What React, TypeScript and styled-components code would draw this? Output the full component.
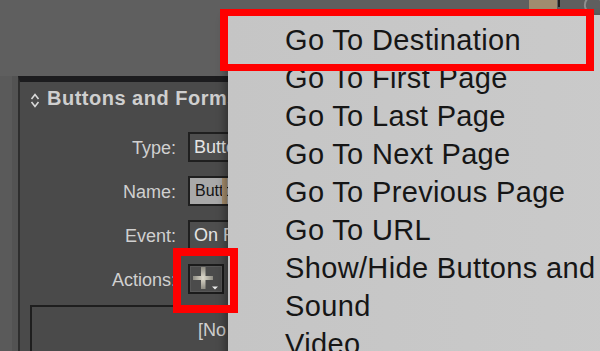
import React from "react";
import styled, { createGlobalStyle } from "styled-components";

const GlobalStyle = createGlobalStyle`
  html, body { margin: 0; padding: 0; background: #5f5f5f; }
  body {
    width: 600px;
    height: 351px;
    overflow: hidden;
    font-family: "Liberation Sans", Arial, sans-serif;
  }
`;

const Stage = styled.div`
  position: relative;
  width: 600px;
  height: 351px;
  overflow: hidden;
  display: flex;
  flex-direction: column;
  background: #5f5f5f;
`;

const TopBar = styled.div`
  height: 76px;
  flex: none;
  display: flex;
  align-items: flex-start;
  padding-left: 529px;
  box-sizing: border-box;
`;

const Swatch = styled.div`
  width: 29px;
  height: 9px;
  background: #a08c6f;
`;

const SwatchEdge = styled.div`
  width: 2px;
  height: 7px;
  margin-left: 1px;
  background: #1e1e1e;
`;

const RingIcon = styled.svg`
  margin-left: 21px;
  display: block;
`;

const Workspace = styled.div`
  flex: 1;
  display: flex;
  background: linear-gradient(90deg, #5a5a5a 0, #5a5a5a 12px, #535353 12px, #535353 18px);
`;

const Panel = styled.section`
  width: 506px;
  margin-left: 18px;
  flex: none;
  display: flex;
  flex-direction: column;
  background: #4a4a4a;
  border-top: 6px solid #1c1c1e;
  border-left: 2px solid #2e2e2e;
`;

const PanelHeader = styled.header`
  display: flex;
  align-items: center;
  gap: 7px;
  height: 24px;
  padding: 4px 0 0 10px;
`;

const CollapseIcon = styled.svg`
  display: block;
  margin-top: 5px;
`;

const PanelTitle = styled.h2`
  margin: 0;
  font-size: 20px;
  line-height: 24px;
  font-weight: 700;
  letter-spacing: 0.5px;
  color: #cfcfcf;
  white-space: nowrap;
`;

const Form = styled.div`
  display: grid;
  grid-template-columns: 156px auto;
  column-gap: 12px;
  row-gap: 14px;
  margin-top: 22px;
  align-items: center;
  justify-items: start;
`;

const Label = styled.label`
  justify-self: end;
  font-size: 18px;
  color: #d0d0d0;
  white-space: nowrap;
  transform: translateY(1px);
`;

const Field = styled.div<{ $light?: boolean }>`
  position: relative;
  width: 300px;
  height: 30px;
  box-sizing: border-box;
  border: 2px solid #1f1f1f;
  background: ${(p) => (p.$light ? "#a9a9a9" : "#4e4e4e")};
  color: ${(p) => (p.$light ? "#141414" : "#e4e4e4")};
  font-size: ${(p) => (p.$light ? "16px" : "18px")};
  line-height: 26px;
  padding-left: ${(p) => (p.$light ? "5px" : "4px")};
  white-space: nowrap;
  overflow: hidden;
`;

const FieldMarker = styled.span`
  position: absolute;
  left: 32px;
  top: 0;
  bottom: 0;
  width: 5px;
  background: #a88f6e;
`;

const ActionButton = styled.button`
  width: 36px;
  height: 30px;
  box-sizing: border-box;
  padding: 0;
  border: 2px solid #1b1b1b;
  background: #4b4b4b;
  box-shadow: inset 0 0 0 1px #575757;
  display: block;
`;

const ActionList = styled.div`
  flex: 1;
  margin: 11px 10px 0 10px;
  border: 2px solid #1e1e1e;
  border-bottom: none;
  padding-top: 13px;
  text-align: center;
  font-size: 18px;
  line-height: 21px;
  color: #cfcfcf;
`;

const Menu = styled.ul`
  position: absolute;
  left: 228px;
  top: 15px;
  width: 400px;
  height: 360px;
  margin: 0;
  padding: 6px 0 0 57px;
  box-sizing: border-box;
  list-style: none;
  background: linear-gradient(90deg, #c5c5c5, #cacaca);
  box-shadow: -3px 3px 8px rgba(0, 0, 0, 0.35);
`;

const MenuItem = styled.li`
  font-size: 29px;
  line-height: 38px;
  letter-spacing: 0.35px;
  color: #161616;
  white-space: nowrap;
`;

const Highlight = styled.div`
  position: absolute;
  box-sizing: border-box;
  border-style: solid;
  border-color: #ff0000;
  pointer-events: none;
`;

const DestinationHighlight = styled(Highlight)`
  left: 220px;
  top: 9px;
  width: 374px;
  height: 62px;
  border-width: 7px 8px;
`;

const ActionsHighlight = styled(Highlight)`
  left: 173px;
  top: 248px;
  width: 65px;
  height: 65px;
  border-width: 8px;
`;

const menuItems = [
  "Go To Destination",
  "Go To First Page",
  "Go To Last Page",
  "Go To Next Page",
  "Go To Previous Page",
  "Go To URL",
  "Show/Hide Buttons and Forms",
  "Sound",
  "Video",
];

export default function App() {
  return (
    <Stage>
      <GlobalStyle />
      <TopBar>
        <Swatch />
        <SwatchEdge />
        <RingIcon width="20" height="9" viewBox="0 0 20 9">
          <circle cx="13" cy="5" r="9" fill="none" stroke="#8f8f8f" strokeWidth="2" />
        </RingIcon>
      </TopBar>
      <Workspace>
        <Panel>
          <PanelHeader>
            <CollapseIcon width="10" height="17" viewBox="0 0 10 17">
              <polyline points="1.5,7 5,2.5 8.5,7" fill="none" stroke="#dadada" strokeWidth="1.6" />
              <polyline points="1.5,10 5,14.5 8.5,10" fill="none" stroke="#dadada" strokeWidth="1.6" />
            </CollapseIcon>
            <PanelTitle>Buttons and Forms</PanelTitle>
          </PanelHeader>
          <Form>
            <Label>Type:</Label>
            <Field>Button</Field>
            <Label>Name:</Label>
            <Field $light>
              Button 1
              <FieldMarker />
            </Field>
            <Label>Event:</Label>
            <Field>On Release or Tap</Field>
            <Label>Actions:</Label>
            <ActionButton aria-label="Add action">
              <svg width="32" height="26" viewBox="0 0 32 26" style={{ display: "block" }}>
                <defs>
                  <linearGradient id="plusH" x1="0" x2="1" y1="0" y2="0">
                    <stop offset="0" stopColor="#8d8b82" />
                    <stop offset="0.5" stopColor="#dcd8ca" />
                    <stop offset="1" stopColor="#8d8b82" />
                  </linearGradient>
                  <linearGradient id="plusV" x1="0" x2="0" y1="0" y2="1">
                    <stop offset="0" stopColor="#8d8b82" />
                    <stop offset="0.5" stopColor="#dcd8ca" />
                    <stop offset="1" stopColor="#8d8b82" />
                  </linearGradient>
                </defs>
                <rect x="11" y="1" width="4.5" height="22" fill="url(#plusV)" />
                <rect x="3" y="10" width="20" height="4" fill="url(#plusH)" />
                <polygon points="22,20.5 28,20.5 25,23.5" fill="#ececec" />
              </svg>
            </ActionButton>
          </Form>
          <ActionList>[No actions added]</ActionList>
        </Panel>
      </Workspace>
      <Menu>
        {menuItems.map((item) => (
          <MenuItem key={item}>{item}</MenuItem>
        ))}
      </Menu>
      <DestinationHighlight />
      <ActionsHighlight />
    </Stage>
  );
}
